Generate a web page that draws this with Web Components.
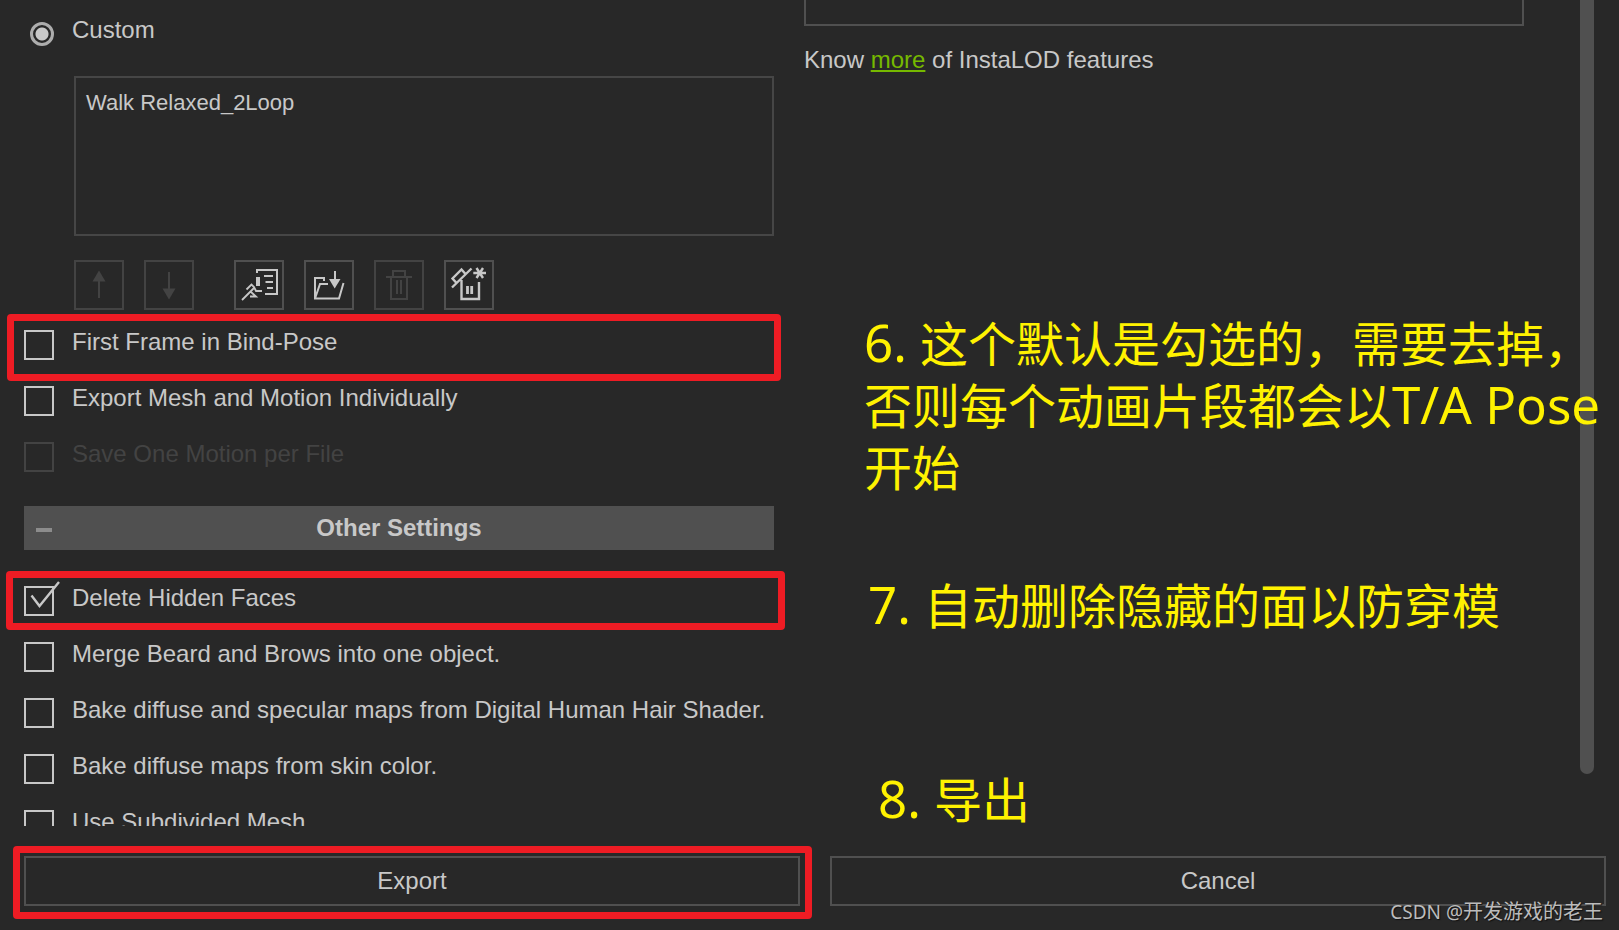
<!DOCTYPE html>
<html lang="en">
<head>
<meta charset="utf-8">
<title>Export FBX</title>
<style>
  body { margin: 0; background: #282828; }
</style>
</head>
<body>
<export-dialog></export-dialog>

<template id="dialog-tpl">
  <style>
    :host {
      --line: #505050; --text: #c8c8c8; --dim: #434343; --red: #ee1c24;
      display: flex; flex-direction: column; height: 100vh; overflow: hidden;
      background: #282828; color: var(--text);
      font: 24px/24px "Liberation Sans", Arial, sans-serif;
    }
    main {
      flex: 1; min-height: 0; display: grid;
      grid-template-columns: 25fr 24fr auto; grid-template-rows: 100%; column-gap: 30px;
      padding: 0 25px 0 24px;
    }
    .settings { padding-top: 18px; min-width: 0; overflow-x: visible; overflow-y: clip; }
    .motions { margin: 26px 0 0 50px; }
    .tools { display: flex; gap: 20px; margin: 24px 0 20px 50px; }
    .tools .apart { margin-left: 20px; }
    .options { display: flex; flex-direction: column; gap: 26px; }
    section-header { margin: 34px 0 36px; }
    .side { position: relative; min-width: 0; }
    .panel { height: 24px; border: 2px solid var(--line); border-top: 0; }
    p { margin: 22px 0 0; white-space: nowrap; }
    a { color: #76b900; text-decoration-thickness: 2px; text-underline-offset: 2px; }
    .thumb { width: 14px; height: 774px; margin-left: 26px; border-radius: 0 0 7px 7px; background: var(--line); }
    footer {
      display: grid; grid-template-columns: 1fr 1fr; gap: 30px;
      padding: 30px 13px 24px 24px;
    }
    .frame { position: relative; }
    mark-note { position: absolute; }
    .n6 { left: 60px; top: 310px; }
    .n7 { left: 64px; top: 572px; }
    .n8 { left: 74px; top: 766px; }
    water-mark { position: absolute; right: 16px; bottom: 6px; }
  </style>
  <main>
    <div class="settings">
      <option-row kind="radio" checked>Custom</option-row>
      <motion-list class="motions"></motion-list>
      <div class="tools">
        <tool-button name="Move up" icon="up" disabled></tool-button>
        <tool-button name="Move down" icon="down" disabled></tool-button>
        <tool-button class="apart" name="Load from motion list" icon="motion"></tool-button>
        <tool-button name="Load from folder" icon="folder"></tool-button>
        <tool-button name="Delete" icon="trash" disabled></tool-button>
        <tool-button name="Clear all" icon="clear"></tool-button>
      </div>
      <div class="options">
        <div class="frame"><option-row>First Frame in Bind-Pose</option-row><mark-frame style="inset:-16px -7px -21px -17px"></mark-frame></div>
        <option-row>Export Mesh and Motion Individually</option-row>
        <option-row disabled>Save One Motion per File</option-row>
      </div>
      <section-header>Other Settings</section-header>
      <div class="options">
        <div class="frame"><option-row checked>Delete Hidden Faces</option-row><mark-frame style="inset:-15px -11px -14px -18px"></mark-frame></div>
        <option-row>Merge Beard and Brows into one object.</option-row>
        <option-row>Bake diffuse and specular maps from Digital Human Hair Shader.</option-row>
        <option-row>Bake diffuse maps from skin color.</option-row>
        <option-row>Use Subdivided Mesh</option-row>
      </div>
    </div>
    <div class="side">
      <div class="panel"></div>
      <p>Know <a href="#instalod">more</a> of InstaLOD features</p>
      <mark-note class="n6"><b>6. </b>这个默认是勾选的，需要去掉，<br>否则每个动画片段都会以<b>T/A Pose</b><br>开始</mark-note>
      <mark-note class="n7"><b>7. </b>自动删除隐藏的面以防穿模</mark-note>
      <mark-note class="n8"><b>8. </b>导出</mark-note>
    </div>
    <div class="thumb"></div>
  </main>
  <footer>
    <div class="frame"><action-button>Export</action-button><mark-frame style="inset:-10px -12px -13px -11px"></mark-frame></div>
    <action-button>Cancel</action-button>
  </footer>
  <water-mark><span>CSDN @</span>开发游戏的老王</water-mark>
</template>

<script>
const ICONS = {
  up: '<path d="M25 20V38"/><path class="f" d="M25 10.5L31.5 21.5H18.5Z"/>',
  down: '<path d="M25 12V30"/><path class="f" d="M25 39.5L31.5 28.5H18.5Z"/>',
  motion: '<path d="M23 13V10H43V34H31M30 16H39M31.500 22H39M33 28H39"/><path class="f" d="M22 17H26V26H22Z"/><path d="M8 40L20 28M12.500 29.500L17.500 24.500L20 27L22 31H28M17 32L22 36.500H16" stroke-width="1.800"/>',
  folder: '<path d="M20 21V18H11V38.500H35L39.500 23M11 38.500L16 24H24M31 11V21"/><path class="f" d="M25 19H36.500L30.700 28.500Z"/>',
  trash: '<path d="M19 17V11H31V17M12 17H38M17 17V39H33V17M23 20V34M27 20V34"/>',
  clear: '<path d="M17.500 20V39H35V22M8 27.500L27.500 8.500M12.500 23L8.500 18.500L17.500 9.500L21.500 14" stroke-width="2.400"/><path d="M23.500 26V34M27.700 26V34" stroke-width="2.800"/><path d="M29.300 13H42M32.500 8L39 18M39 8L32.500 18" stroke-width="2.400"/>'
};

class Base extends HTMLElement {
  connectedCallback() {
    if (!this.shadowRoot) this.attachShadow({ mode: "open" }).innerHTML = this.view();
  }
}

customElements.define("option-row", class extends Base {
  view() {
    const radio = this.getAttribute("kind") === "radio";
    const on = this.hasAttribute("checked"), off = this.hasAttribute("disabled");
    return `<style>
      :host { display: block; }
      label { display: flex; gap: 18px; height: 30px; white-space: nowrap; }
      label.radio { height: 32px; }
      .box { position: relative; flex: none; width: 30px; height: 30px; }
      input { appearance: none; display: block; box-sizing: border-box; margin: 0; width: 30px; height: 30px; border: 2px solid var(--text); }
      input[type=radio] { width: 24px; height: 24px; margin: 4px 0 0 6px; border: 3px solid #adadad; border-radius: 50%; }
      input[type=radio]:checked { background: radial-gradient(circle, var(--text) 6px, transparent 7px); }
      input:disabled { border-color: var(--dim); }
      .off { color: var(--dim); }
      svg { position: absolute; left: 0; top: 0; overflow: visible; pointer-events: none; }
    </style>
    <label class="${radio ? "radio" : ""} ${off ? "off" : ""}">
      <span class="box"><input type="${radio ? "radio" : "checkbox"}" ${on ? "checked" : ""} ${off ? "disabled" : ""}>
      ${on && !radio ? '<svg width="30" height="30" fill="none" stroke="#c8c8c8" stroke-width="2.400"><path d="M7.500 9.500L15.500 20L35 -4"/></svg>' : ""}</span>
      <span><slot></slot></span>
    </label>`;
  }
});

customElements.define("motion-list", class extends Base {
  view() {
    return `<style>
      :host { display: block; height: 160px; }
      select { appearance: none; display: block; box-sizing: border-box; width: 100%; height: 100%; margin: 0;
        padding: 12px 10px; border: 2px solid #464646; border-radius: 0; outline: 0; overflow: hidden;
        background: transparent; color: var(--text); font: 22px/28px "Liberation Sans", Arial, sans-serif; }
      option { padding: 0; min-height: 28px; color: var(--text); }
    </style>
    <select size="4" aria-label="Motions"><option>Walk Relaxed_2Loop</option></select>`;
  }
});

customElements.define("tool-button", class extends Base {
  view() {
    return `<style>
      :host { display: block; }
      button { display: block; box-sizing: border-box; width: 50px; height: 50px; padding: 0; border: 2px solid var(--line); background: none; color: var(--text); }
      button:disabled { border-color: var(--dim); color: var(--dim); }
      svg { display: block; margin: -2px; fill: none; stroke: currentColor; stroke-width: 2; }
      .f { fill: currentColor; stroke: none; }
    </style>
    <button aria-label="${this.getAttribute("name")}" ${this.hasAttribute("disabled") ? "disabled" : ""}>
      <svg width="50" height="50" viewBox="0 0 50 50">${ICONS[this.getAttribute("icon")]}</svg></button>`;
  }
});

customElements.define("section-header", class extends Base {
  view() {
    return `<style>
      :host { display: block; }
      button { display: grid; grid-template-columns: 1fr auto 1fr; align-items: center; width: 100%; height: 44px;
        padding: 0 12px; border: 0; background: var(--line); color: var(--text); font: inherit; font-weight: bold; }
      i { width: 16px; height: 4px; margin-top: 4px; background: #8c8c8c; }
    </style>
    <button aria-expanded="true"><i></i><span><slot></slot></span></button>`;
  }
});

customElements.define("action-button", class extends Base {
  view() {
    return `<style>
      :host { display: block; }
      button { display: block; width: 100%; height: 50px; padding: 0; border: 2px solid var(--line); background: none; color: var(--text); font: inherit; }
    </style><button><slot></slot></button>`;
  }
});

customElements.define("mark-frame", class extends Base {
  view() {
    return `<style>:host { position: absolute; border: 7px solid var(--red); border-radius: 4px; pointer-events: none; }</style>`;
  }
});

customElements.define("mark-note", class extends Base {
  view() {
    return `<style>
      :host { display: block; z-index: 1; white-space: pre; color: #fff200; font: 48px/62px "Noto Sans CJK SC", sans-serif; }
      ::slotted(b) { font: 51px/1 "Noto Sans", sans-serif; }
    </style><slot></slot>`;
  }
});

customElements.define("water-mark", class extends Base {
  view() {
    return `<style>
      :host { display: block; white-space: nowrap; color: #bcbcbc; text-shadow: 1px 1px 1px #111; font: 20px/26px "Noto Sans CJK SC", sans-serif; }
      ::slotted(span) { font: 19px/1 "Noto Sans", sans-serif; }
    </style><slot></slot>`;
  }
});

customElements.define("export-dialog", class extends HTMLElement {
  connectedCallback() {
    this.attachShadow({ mode: "open" }).append(document.getElementById("dialog-tpl").content.cloneNode(true));
  }
});
</script>
</body>
</html>
